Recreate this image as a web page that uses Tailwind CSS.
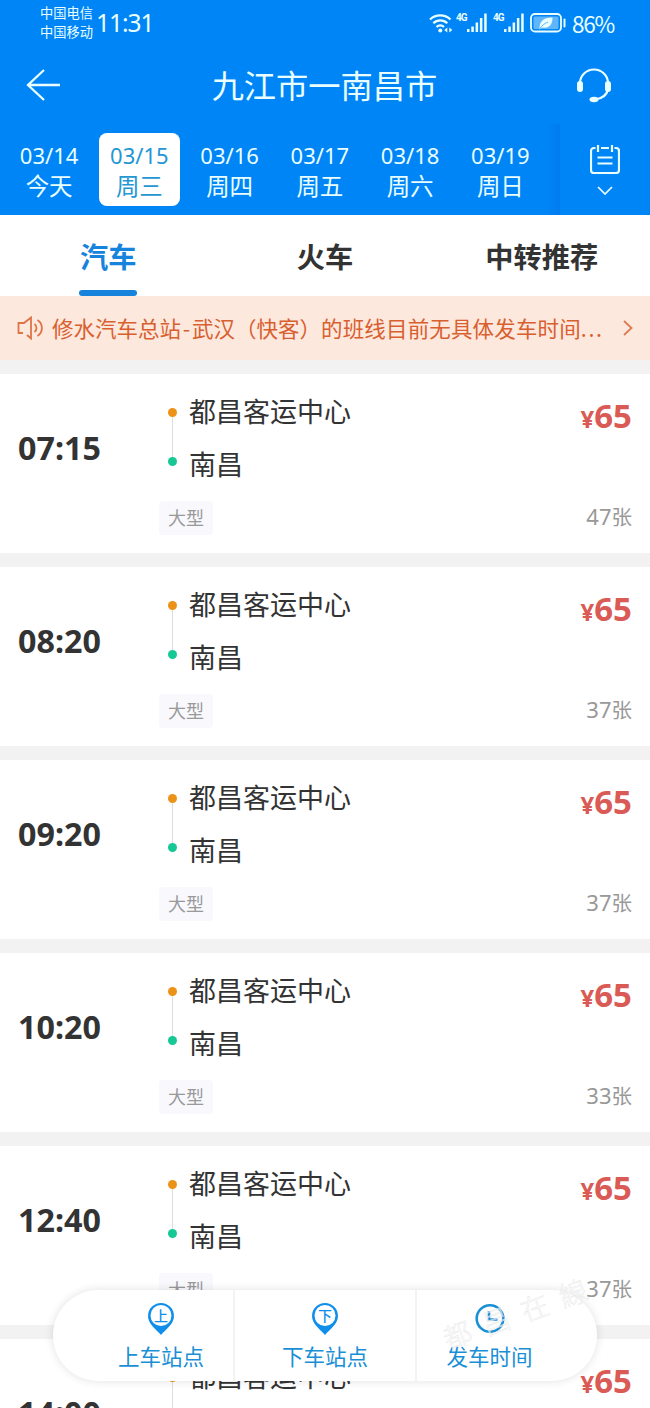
<!DOCTYPE html>
<html lang="zh-CN">
<head>
    <meta charset="UTF-8">
    <meta name="viewport" content="width=device-width, initial-scale=1.0">
    <title>九江市—南昌市</title>
    <script src="https://cdn.jsdelivr.net/npm/@tailwindcss/browser@4"></script>
</head>
<body class="relative h-[1408px] w-[650px] overflow-hidden bg-[#f2f2f2] font-['Noto_Sans_CJK_SC',sans-serif] text-[#333]">

    <header class="h-[215px] bg-[#0085f7] text-[#e9ffff]">
        <!-- status bar -->
        <div class="flex h-12 items-center pl-10 pr-9">
            <div class="-mt-[5px] w-[54px] text-[13.250px] leading-[19px]"><p>中国电信</p><p>中国移动</p></div>
            <div class="-mt-px ml-[2px] font-['Noto_Sans',sans-serif] text-[24.500px] leading-none tracking-[-1px]">11:31</div>
            <div class="-mt-[3px] ml-auto flex items-center">
                <svg class="h-[22px] w-6" viewBox="0 0 24 22" fill="none" stroke="currentColor" stroke-width="2.3">
                    <path d="M1 7.500a15 15 0 0 1 20.500 0M4.300 11.300a10 10 0 0 1 14 0M7.500 15a5.500 5.500 0 0 1 7.500 0"/>
                    <circle cx="11.300" cy="18.500" r="2" fill="currentColor" stroke="none"/>
                    <path d="M15.300 18l3-2.500v5zM23.300 18l-3-2.500v5z" fill="currentColor" stroke="none"/>
                </svg>
                <span class="-mt-[10px] ml-[3px] w-[11px] font-['Roboto',sans-serif] text-[10px] font-bold leading-none tracking-[-1px]">4G</span>
                <svg class="h-5 w-5" viewBox="0 0 20 20" fill="currentColor">
                    <rect x="0" y="16" width="2.500" height="3"/><rect x="4.300" y="13.500" width="2.500" height="5.500"/><rect x="8.600" y="9.500" width="2.500" height="9.500"/><rect x="12.900" y="5" width="2.500" height="14"/><rect x="17.200" y="0.500" width="2.500" height="18.500"/>
                </svg>
                <span class="-mt-[10px] ml-[6px] w-[11px] font-['Roboto',sans-serif] text-[10px] font-bold leading-none tracking-[-1px]">4G</span>
                <svg class="h-5 w-5" viewBox="0 0 20 20" fill="currentColor">
                    <rect x="0" y="16" width="2.500" height="3"/><rect x="4.300" y="13.500" width="2.500" height="5.500"/><rect x="8.600" y="9.500" width="2.500" height="9.500"/><rect x="12.900" y="5" width="2.500" height="14"/><rect x="17.200" y="0.500" width="2.500" height="18.500"/>
                </svg>
                <svg class="ml-[6px] h-5 w-9" viewBox="0 0 36 20" fill="none">
                    <rect x="1" y="1" width="30" height="17.500" rx="4" stroke="currentColor" stroke-width="1.800"/>
                    <rect x="3.500" y="3.500" width="25" height="12.500" rx="1.500" fill="#5fb6fb"/>
                    <path d="M9.500 16c0-7 3-11.500 13-11.500 0 7-3 11-10 10z" fill="currentColor"/>
                    <path d="M9.500 16.500c2-4 5-6 8.500-7.500" stroke="#5fb6fb"/>
                    <rect x="33.500" y="5.500" width="2" height="9" rx="1" fill="currentColor"/>
                </svg>
            </div>
            <div class="-mt-[2px] ml-[6px] text-[22.500px] leading-none tracking-[-1.200px]">86%</div>
        </div>

        <!-- title -->
        <div class="flex h-[76px] items-center justify-between pl-[26px] pr-[38px]">
            <svg class="-mt-[3px] h-8 w-[34px]" viewBox="0 0 34 32" fill="none" stroke="currentColor" stroke-width="2.300"><path d="M34 16H2M18 1L2 16l16 15"/></svg>
            <h1 class="-mt-[3px] ml-[13px] text-[32.250px] leading-none">九江市一南昌市</h1>
            <svg class="-mt-[2px] h-[35px] w-[36px]" viewBox="0 0 36 35" fill="none" stroke="currentColor" stroke-width="2.200">
                <path d="M4 15a14 13.500 0 0 1 28 0M32 21c-1 6-6 9.500-13 10.500"/>
                <rect x="1" y="13" width="6" height="11" rx="3" fill="currentColor" stroke="none"/><rect x="29" y="13" width="6" height="11" rx="3" fill="currentColor" stroke="none"/>
                <ellipse cx="18" cy="31.500" rx="4.500" ry="2.700" fill="currentColor" stroke="none"/>
            </svg>
        </div>

        <!-- dates -->
        <div class="flex h-[91px] pl-1">
            <div id="dates" class="flex"></div>
            <div class="h-full w-[14px] bg-linear-to-r from-[#0085f7] to-[#007cee]"></div>
            <div class="flex flex-1 flex-col items-center pt-5">
                <svg class="h-[30px] w-[30px]" viewBox="0 0 30 30" fill="none" stroke="currentColor" stroke-width="2.200">
                    <path d="M5.500 4H4a3 3 0 0 0-3 3v19a3 3 0 0 0 3 3h22a3 3 0 0 0 3-3V7a3 3 0 0 0-3-3h-1.500M11 4h8M8 1v7M22 1v7M7.500 13.500h15M7.500 19.500h15"/>
                </svg>
                <svg class="mt-[12px] h-[9px] w-4" viewBox="0 0 16 9" fill="none" stroke="currentColor" stroke-width="1.700"><path d="M1 1l7 7 7-7"/></svg>
            </div>
        </div>
    </header>

    <!-- tabs -->
    <nav class="grid h-[81px] grid-cols-3 bg-white text-center text-[28.250px] font-bold leading-[82px]">
        <a class="flex flex-col items-center text-[#1684dc]">汽车<span class="-mt-[7px] h-[6px] w-[58px] shrink-0 rounded-full bg-[#1684dc]"></span></a>
        <a>火车</a>
        <a>中转推荐</a>
    </nav>

    <!-- notice -->
    <div class="flex h-16 items-center bg-[#fde8de] pl-[17px] pr-[17px] text-[#d8602e]">
        <svg class="h-6 w-[27px] shrink-0" viewBox="0 0 27 24" fill="none" stroke="currentColor" stroke-width="1.800" opacity=".85"><path d="M6 17H1.500V7H7l7-5.500v21L10 19M17.500 8a5 5 0 0 1 0 8M20.500 4a9.500 9.500 0 0 1 0 16"/></svg>
        <p class="ml-2 whitespace-nowrap text-[21.500px] leading-none">修水汽车总站<span class="inline-block w-[11px] text-center">-</span>武汉（快客）<span class="tracking-[0.150px]">的班线目前无具体发车时间</span><span class="tracking-[1.600px]">...</span></p>
        <svg class="ml-auto h-4 w-[10px] shrink-0" viewBox="0 0 10 16" fill="none" stroke="currentColor" stroke-width="1.800" opacity=".8"><path d="M1 1l7.500 7L1 15"/></svg>
    </div>

    <main id="trips" class="mt-[14px] flex h-[1034px] flex-col gap-[14px] overflow-hidden"></main>

    <!-- floating filter bar -->
    <div class="absolute left-[53px] top-[1290px] flex h-[91px] w-[544px] rounded-full bg-white text-[21.500px] leading-none text-[#1a8fd6] shadow-[0_0_10px_rgba(0,0,0,0.12)]">
        <div class="flex w-[182px] flex-col items-center border-r-2 border-[#f3f3f3] pl-9 pt-[13px]">
            <svg class="h-8 w-[26px]" viewBox="0 0 26 32"><path d="M13 0a13 13 0 0 0-13 13c0 8 8 13 13 19 5-6 13-11 13-19A13 13 0 0 0 13 0z" fill="#0f8fea"/><circle cx="13" cy="12.500" r="10.500" fill="#fff"/><text x="13" y="17.500" font-size="14" font-weight="500" text-anchor="middle" fill="#0f8fea">上</text></svg>
            <span class="mt-[10px] whitespace-nowrap">上车站点</span>
        </div>
        <div class="flex w-[182px] flex-col items-center border-r-2 border-[#f3f3f3] pt-[13px]">
            <svg class="h-8 w-[26px]" viewBox="0 0 26 32"><path d="M13 0a13 13 0 0 0-13 13c0 8 8 13 13 19 5-6 13-11 13-19A13 13 0 0 0 13 0z" fill="#0f8fea"/><circle cx="13" cy="12.500" r="10.500" fill="#fff"/><text x="13" y="17.500" font-size="14" font-weight="500" text-anchor="middle" fill="#0f8fea">下</text></svg>
            <span class="mt-[10px] whitespace-nowrap">下车站点</span>
        </div>
        <div class="flex w-[180px] flex-col items-center pr-[35px] pt-[13px]">
            <svg class="h-8 w-[30px]" viewBox="0 0 30 32" fill="none" stroke="#1a8fd6" stroke-width="2.600"><circle cx="15" cy="15.500" r="13.300"/><path d="M14 8v8.500h8.500"/></svg>
            <span class="mt-[10px] whitespace-nowrap">发车时间</span>
        </div>
    </div>

    <!-- watermark -->
    <svg class="absolute left-[430px] top-[1270px] h-[110px] w-[180px]" viewBox="0 0 180 110">
        <text x="18" y="80" transform="rotate(-20 18 80)" font-family="Noto Sans CJK SC" font-size="28" font-weight="300" letter-spacing="13" fill="#fff" fill-opacity=".55" stroke="#e3e3e3" stroke-width=".4">都昌在線</text>
    </svg>

    <script>
        const dates = [['03/14', '今天'], ['03/15', '周三'], ['03/16', '周四'], ['03/17', '周五'], ['03/18', '周六'], ['03/19', '周日']];
        document.getElementById('dates').innerHTML = dates.map(([day, week], i) => `
            <div class="w-[90.250px] px-[4.500px] pt-[9px]">
                <div class="flex h-[73px] flex-col items-center rounded-lg ${i === 1 ? 'bg-white text-[#2596d4]' : ''}">
                    <span class="mt-[11px] font-['Noto_Sans',sans-serif] text-[22px] leading-[22px]">${day}</span>
                    <span class="mt-[7px] text-[23.500px] leading-6">${week}</span>
                </div>
            </div>`).join('');

        const trips = [['07:15', 47], ['08:20', 37], ['09:20', 37], ['10:20', 33], ['12:40', 37], ['14:00', 37]];
        document.getElementById('trips').innerHTML = trips.map(([time, left]) => `
            <article class="flex h-[179px] shrink-0 bg-white pr-[18px]">
                <div class="w-[159px] pl-[18px] pt-[58px] font-['Noto_Sans',sans-serif] text-[32.250px] font-bold leading-8">${time}</div>
                <div class="flex-1">
                    <div class="flex pt-[23px]">
                        <div class="ml-[9px] flex h-[59px] w-[9px] flex-col items-center pt-[11px]">
                            <i class="size-[9px] shrink-0 rounded-full bg-[#ed9218]"></i>
                            <i class="h-10 w-px shrink-0 bg-[#ddd]"></i>
                            <i class="size-[9px] shrink-0 rounded-full bg-[#17c795]"></i>
                        </div>
                        <div class="ml-[12px] text-[27px] leading-[27px]">
                            <p>都昌客运中心</p>
                            <p class="mt-[26px]">南昌</p>
                        </div>
                    </div>
                    <span class="mt-[24px] block h-[34px] w-[54px] rounded-sm bg-[#f8f8fd] text-center text-[18px] leading-[33px] text-[#999]">大型</span>
                </div>
                <div class="flex flex-col items-end">
                    <div class="mt-[25px] font-['Noto_Sans',sans-serif] text-[33px] font-bold leading-[33px] text-[#da5a56]"><span class="text-[24px]">¥</span>65</div>
                    <div class="mt-[70px] text-[20.500px] leading-[22px] text-[#999]"><span class="font-['Noto_Sans',sans-serif] text-[22px]">${left}</span>张</div>
                </div>
            </article>`).join('');
    </script>
</body>
</html>
